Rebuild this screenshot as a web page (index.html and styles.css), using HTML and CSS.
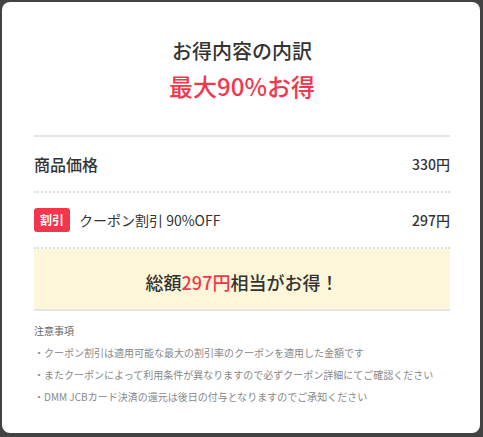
FILE: index.html
```html
<!DOCTYPE html>
<html lang="ja">
<head>
    <meta charset="UTF-8">
    <meta name="viewport" content="width=device-width, initial-scale=1.0">
    <title>お得内容の内訳</title>
    <link rel="stylesheet" href="styles.css">
</head>
<body>
    <div class="modal">
        <div class="modal-header">
            <h2>お得内容の内訳</h2>
            <p class="max-discount">最大90%お得</p>
        </div>

        <div class="breakdown">
            <div class="breakdown-row">
                <span class="row-label strong">商品価格</span>
                <span class="row-price">330円</span>
            </div>
            <div class="breakdown-row">
                <span class="row-label">
                    <span class="badge">割引</span>
                    クーポン割引 90%OFF
                </span>
                <span class="row-price">297円</span>
            </div>
            <div class="total-box">
                総額<span class="accent">297円</span>相当がお得！
            </div>
        </div>

        <div class="notes">
            <p class="notes-title">注意事項</p>
            <p>・クーポン割引は適用可能な最大の割引率のクーポンを適用した金額です</p>
            <p>・またクーポンによって利用条件が異なりますので必ずクーポン詳細にてご確認ください</p>
            <p>・DMM JCBカード決済の還元は後日の付与となりますのでご承知ください</p>
        </div>
    </div>
</body>
</html>
```

FILE: styles.css
```css
body {
    font-family: "Noto Sans CJK JP", "Noto Sans", sans-serif;
    margin: 0;
    background-color: #434343;
    color: #333;
    height: 437px;
    padding: 2px 3px 4px 2px;
    box-sizing: border-box;
    display: flex;
}

.modal {
    background-color: #fff;
    border-radius: 8px;
    flex: 1;
    padding: 34px 30px 0 32px;
}

.modal-header {
    text-align: center;
    margin-bottom: 31px;
}

.modal-header h2 {
    margin: 0 0 2px;
    font-size: 20px;
    line-height: 30px;
    font-weight: 500;
    color: #333;
}

.max-discount {
    margin: 0;
    font-size: 24px;
    line-height: 36px;
    font-weight: 500;
    color: #f4364c;
}

.breakdown {
    border-top: 2px solid #e5e5e5;
}

.breakdown-row {
    display: flex;
    justify-content: space-between;
    align-items: center;
    height: 54px;
    border-bottom: 2px dotted #dcdcdc;
}

.row-label {
    display: flex;
    align-items: center;
    gap: 9px;
    font-size: 14px;
}

.row-label.strong {
    font-size: 16px;
    font-weight: 500;
}

.row-price {
    font-size: 14px;
    font-weight: 500;
}

.badge {
    background-color: #f4364c;
    color: #fff;
    font-size: 12px;
    font-weight: bold;
    line-height: 24px;
    padding: 0 6px;
    border-radius: 3px;
}

.total-box {
    background-color: #fdf6d8;
    text-align: center;
    font-size: 18px;
    font-weight: 500;
    line-height: 26px;
    padding: 20px 0 14px;
    border-bottom: 2px solid #e5e5e5;
}

.accent {
    color: #f4364c;
}

.notes {
    margin-top: 9px;
    font-size: 10px;
    line-height: 22px;
    color: #888;
}

.notes p {
    margin: 0;
}

.notes-title {
    color: #666;
}
```
